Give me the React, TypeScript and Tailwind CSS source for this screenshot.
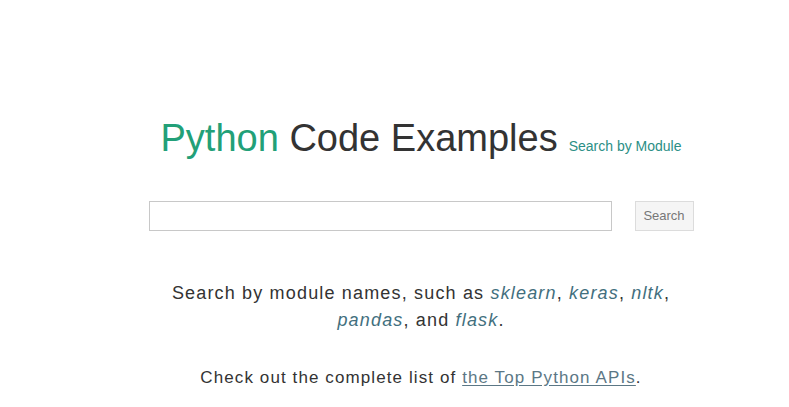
export default function App() {
  return (
    <div className="min-h-[407px] w-full bg-white font-['Liberation_Sans',Arial,sans-serif] text-[#333]">
      <div className="flex flex-col items-center pl-[53px] pt-[119px]">
        <div className="flex items-baseline gap-[11px]">
          <h1 className="text-[38px] leading-none font-normal">
            <span className="text-[#22a078]">Python</span> Code Examples
          </h1>
          <a href="#" className="text-[14px] leading-none text-[#2b8f86]">
            Search by Module
          </a>
        </div>

        <form className="mt-[44px] flex gap-[23px]" onSubmit={(e) => e.preventDefault()}>
          <input
            type="text"
            className="h-[30px] w-[463px] border border-[#c8c8c8] bg-white px-2 text-[14px] outline-none"
          />
          <button
            type="submit"
            className="h-[30px] w-[59px] border border-[#dcdcdc] bg-[#f5f5f5] text-[13px] text-[#777]"
          >
            Search
          </button>
        </form>

        <p className="mt-[49px] w-[520px] text-center text-[18px] leading-[27px] tracking-[1.17px]">
          Search by module names, such as{' '}
          <a href="#" className="italic text-[#426f7e]">sklearn</a>,{' '}
          <a href="#" className="italic text-[#426f7e]">keras</a>,{' '}
          <a href="#" className="italic text-[#426f7e]">nltk</a>,{' '}
          <a href="#" className="italic text-[#426f7e]">pandas</a>, and{' '}
          <a href="#" className="italic text-[#426f7e]">flask</a>.
        </p>

        <p className="mt-[30px] text-center text-[17px] leading-[27px] tracking-[1.1px]">
          Check out the complete list of{' '}
          <a href="#" className="text-[#5b7785] underline underline-offset-2">
            the Top Python APIs
          </a>
          .
        </p>
      </div>
    </div>
  );
}
